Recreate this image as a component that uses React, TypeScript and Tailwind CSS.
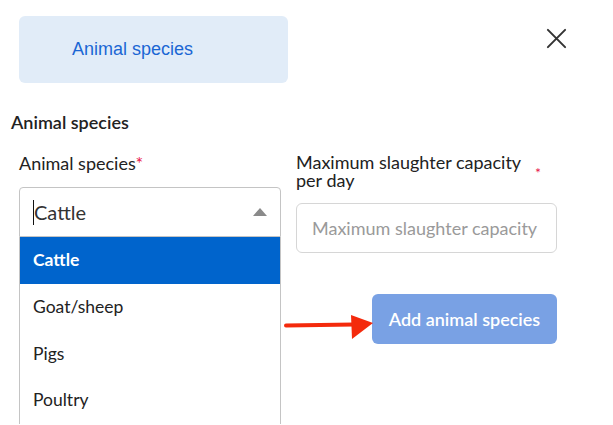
import { useState } from 'react';

const speciesOptions = ['Cattle', 'Goat/sheep', 'Pigs', 'Poultry'];

export default function App() {
  const [selected] = useState('Cattle');

  return (
    <div className="relative h-[425px] w-[613px] overflow-hidden bg-white font-['Lato','Noto_Sans',sans-serif] text-[#222]">
      {/* Tab + close */}
      <div className="flex items-start justify-between pl-[19px] pr-[46px] pt-4">
        <div className="flex h-[67px] w-[269px] items-center rounded-md bg-[#e1ecf8] pl-[53px] font-['Liberation_Sans',Arial,sans-serif] text-[18px] text-[#1a66d4]">
          Animal species
        </div>
        <button className="mt-[12px] text-[#333]" aria-label="Close">
          <svg width="21" height="21" viewBox="0 0 22 22" fill="none" stroke="currentColor" strokeWidth="2.1" strokeLinecap="round">
            <path d="M2 2L20 20M20 2L2 20" />
          </svg>
        </button>
      </div>

      <h2 className="mt-[29px] pl-[11px] text-[18px] font-semibold leading-5">Animal species</h2>

      <div className="mt-[21px] grid grid-cols-[262px_261px] gap-x-[15px] pl-[19px]">
        {/* Left column */}
        <div>
          <label className="block text-[18px] leading-5">
            Animal species<span className="text-[#e8174a]">*</span>
          </label>
          <div className="relative mt-[14px]">
            <div className="flex h-[50px] items-center justify-between rounded-t border border-[#c4c4c4] pl-[13px] pr-[13px]">
              <span className="flex items-center text-[20px] text-[#333]">
                <span className="h-[25px] w-px bg-[#111]" />
                {selected}
              </span>
              <svg width="14" height="8" viewBox="0 0 14 8">
                <path d="M0 8L7 0L14 8Z" fill="#8a8a8a" />
              </svg>
            </div>
            <ul className="absolute left-0 top-full w-[262px] border-x border-[#c4c4c4] bg-white">
              {speciesOptions.map((opt) => (
                <li
                  key={opt}
                  className={
                    opt === selected
                      ? 'flex h-[47px] items-center bg-[#0064cc] pl-[13px] text-[17.5px] font-bold text-white'
                      : 'flex h-[46.5px] items-center pl-[13px] text-[17.5px] text-[#222]'
                  }
                >
                  {opt}
                </li>
              ))}
            </ul>
          </div>
        </div>

        {/* Right column */}
        <div>
          <label className="flex items-start justify-between pr-[16px] text-[18px] leading-[18px]">
            <span className="w-[225px]">Maximum slaughter capacity per day</span>
            <span className="mt-[11px] text-[14px] text-[#e8174a]">*</span>
          </label>
          <input
            className="mt-[14px] h-[50px] w-full rounded-md border border-[#d6d6d6] px-[15px] text-[18px] outline-none placeholder:text-[#9a9a9a]"
            placeholder="Maximum slaughter capacity per day"
          />
          <div className="mt-[41px] flex justify-end">
            <button className="h-[50px] w-[185px] rounded-md bg-[#79a1e4] text-[18px] font-semibold text-white">
              Add animal species
            </button>
          </div>
        </div>
      </div>

      {/* Annotation arrow */}
      <svg className="absolute left-[284px] top-[312px]" width="92" height="30" viewBox="0 0 92 30">
        <path d="M2 13.5L70 12.5" stroke="#f42a0c" strokeWidth="4" strokeLinecap="round" />
        <path d="M67 3L89 11L68 27Z" fill="#f42a0c" />
      </svg>
    </div>
  );
}
